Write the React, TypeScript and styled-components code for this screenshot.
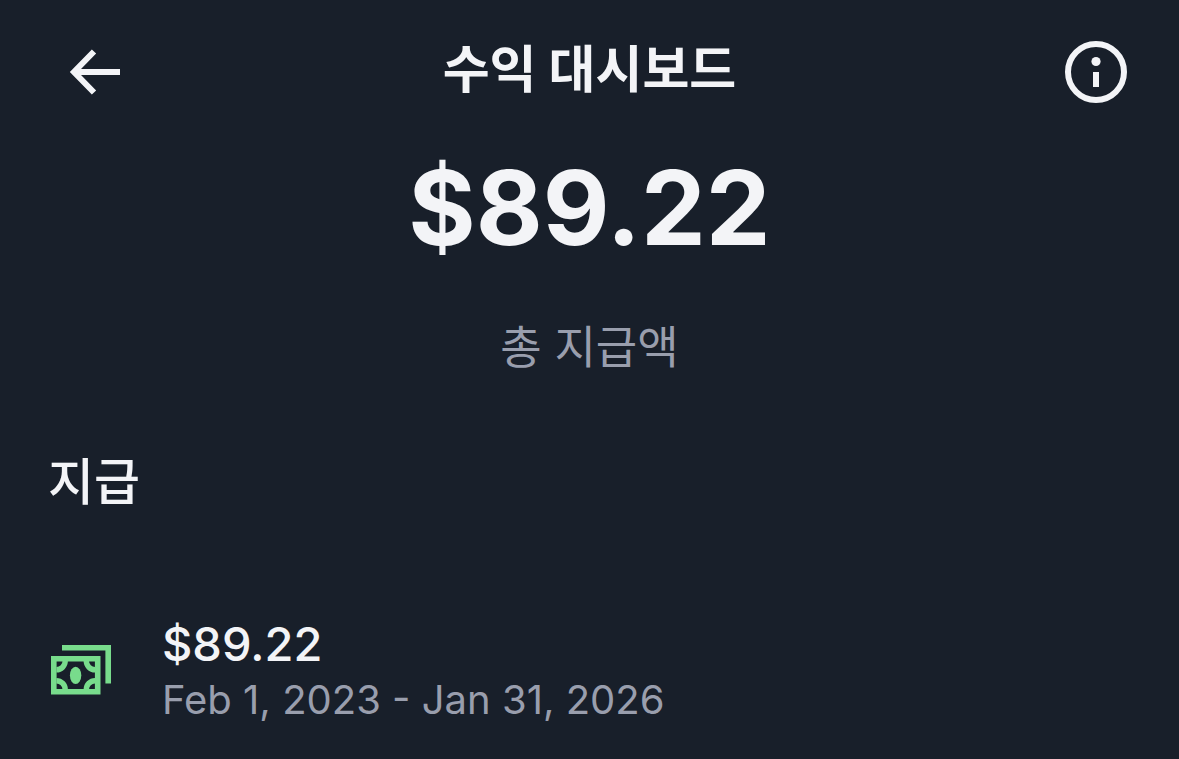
import React from 'react';
import styled, { createGlobalStyle } from 'styled-components';

const GlobalStyle = createGlobalStyle`
  * { box-sizing: border-box; }
  body {
    margin: 0;
    background: #181f2a;
    color: #f3f4f7;
    font-family: Inter, "Noto Sans CJK KR", sans-serif;
  }
  h1, h2, p, ul { margin: 0; padding: 0; }
`;

const Page = styled.div`
  min-height: 100vh;
  background: #181f2a;
`;

const TopBar = styled.header`
  display: grid;
  grid-template-columns: 1fr auto 1fr;
  align-items: center;
  height: 144px;
  padding: 0 48px;
`;

const IconButton = styled.button<{ $align: 'start' | 'end' }>`
  display: flex;
  justify-self: ${({ $align }) => $align};
  padding: 0;
  border: 0;
  background: none;
  color: inherit;
  cursor: pointer;
`;

const Title = styled.h1`
  font-size: 51px;
  line-height: 72px;
  padding-bottom: 4px;
  font-weight: 700;
`;

const Summary = styled.section`
  display: flex;
  flex-direction: column;
  align-items: center;
`;

const Total = styled.p`
  font-size: 103px;
  line-height: 128px;
  font-weight: 700;
`;

const TotalLabel = styled.p`
  margin-top: 42px;
  font-size: 45px;
  line-height: 68px;
  color: #999ead;
`;

const Payouts = styled.section`
  padding: 62px 48px 32px;
`;

const SectionTitle = styled.h2`
  font-size: 50px;
  line-height: 76px;
  font-weight: 500;
`;

const PayoutList = styled.ul`
  margin-top: 96px;
  list-style: none;
`;

const PayoutItem = styled.li`
  display: flex;
  align-items: center;
  gap: 48px;
`;

const PayoutAmount = styled.p`
  font-size: 47px;
  line-height: 56px;
  font-weight: 500;
`;

const PayoutPeriod = styled.p`
  font-size: 40px;
  line-height: 56px;
  color: #999ead;
`;

const BackIcon = () => (
  <svg width="96" height="64" viewBox="0 0 96 64" fill="none" stroke="currentColor" strokeWidth="6" aria-hidden="true">
    <path d="M72 32H28M46 11.5L26 32L46 52.5" />
  </svg>
);

const InfoIcon = () => (
  <svg width="70" height="64" viewBox="0 0 70 64" fill="none" aria-hidden="true">
    <circle cx="35" cy="32" r="28" stroke="currentColor" strokeWidth="6" />
    <circle cx="35" cy="21.5" r="4.6" fill="currentColor" />
    <path d="M32 32h6v15h-6z" fill="currentColor" />
  </svg>
);

const CashIcon = () => (
  <svg width="66" height="66" viewBox="0 2 66 66" fill="none" stroke="#78dc8c" aria-hidden="true">
    <path d="M14 10.7H60.2V46.5" strokeWidth="5.6" />
    <path d="M5.8 21.8H49.7V54.7H5.8Z" strokeWidth="5.6" />
    <path
      d="M17.2 24A8.8 8.8 0 0 1 8.4 32.8M38.3 24A8.8 8.8 0 0 0 47.1 32.8M17.2 52.5A8.8 8.8 0 0 0 8.4 43.7M38.3 52.5A8.8 8.8 0 0 1 47.1 43.7"
      strokeWidth="5.4"
    />
    <ellipse cx="27.6" cy="38.3" rx="5.7" ry="8.6" fill="#78dc8c" stroke="none" />
  </svg>
);

export default function App() {
  return (
    <Page>
      <GlobalStyle />
      <TopBar>
        <IconButton type="button" aria-label="뒤로" $align="start">
          <BackIcon />
        </IconButton>
        <Title>수익 대시보드</Title>
        <IconButton type="button" aria-label="정보" $align="end">
          <InfoIcon />
        </IconButton>
      </TopBar>
      <main>
        <Summary>
          <Total>$89.22</Total>
          <TotalLabel>총 지급액</TotalLabel>
        </Summary>
        <Payouts>
          <SectionTitle>지급</SectionTitle>
          <PayoutList>
            <PayoutItem>
              <CashIcon />
              <div>
                <PayoutAmount>$89.22</PayoutAmount>
                <PayoutPeriod>Feb 1, 2023 - Jan 31, 2026</PayoutPeriod>
              </div>
            </PayoutItem>
          </PayoutList>
        </Payouts>
      </main>
    </Page>
  );
}
